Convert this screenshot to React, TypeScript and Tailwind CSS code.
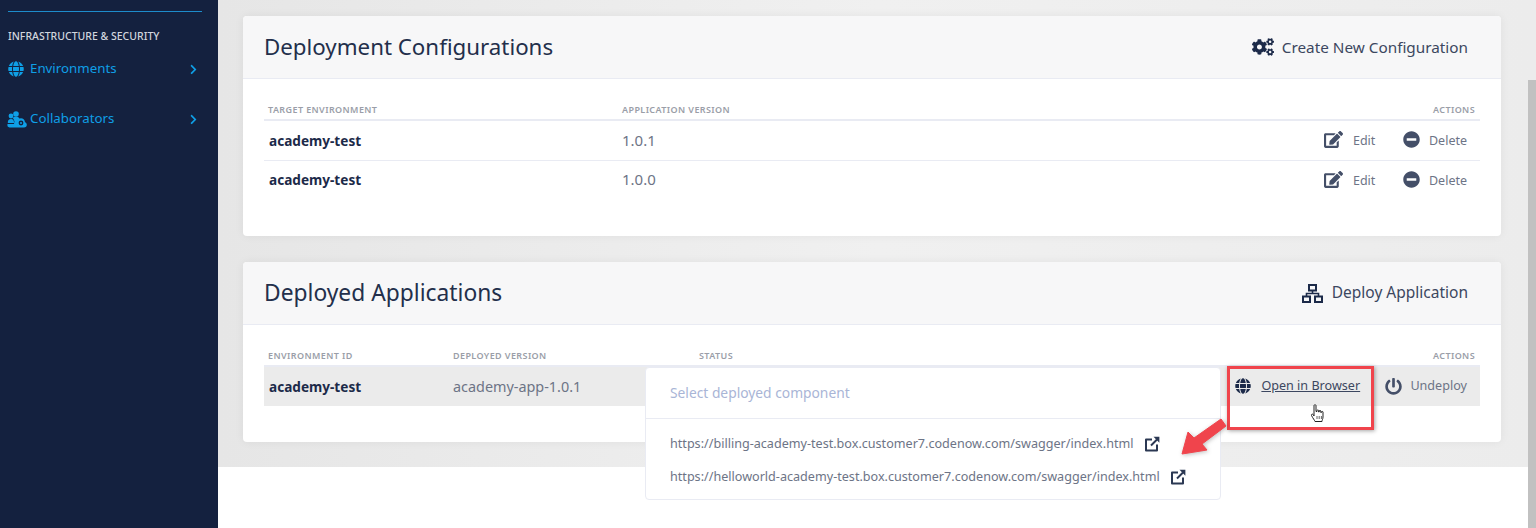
import React from "react";
import { FaGlobe, FaChevronRight, FaCogs, FaEdit, FaMinusCircle, FaPowerOff } from "react-icons/fa";

const font = "font-['Noto_Sans','Liberation_Sans',sans-serif]";

function CollabIcon() {
  return (
    <svg width="20" height="17" viewBox="0 0 20 17" fill="#0f9fe6" className="shrink-0 mr-[3px] -ml-[1px]">
      <circle cx="4" cy="5" r="2.400" />
      <circle cx="9" cy="3" r="2.800" />
      <path d="M.8 12c0-3 1-4 3.200-4s3 1 3 4H.8Z" />
      <path d="M5.500 7c.8-1 2-1.300 3.500-1.300 1.800 0 3 .6 3.500 2L11 9.500 10.500 12H7.500C7.500 9.500 6.800 8 5.500 7Z" />
      <path d="M2.500 16.500C.8 16.200 0 15 .5 13H7v3.500Z" />
      <path d="M7 16.500h10c1.700 0 2.800-1 2.800-2.700 0-1.300-.8-2.200-1.800-2.500-.2-2.500-2-4-4-4s-3.500 1.200-4 3C8 10.500 7 11.200 7 13Z" />
      <circle cx="14" cy="12" r="2.400" fill="#14213f" />
      <circle cx="14" cy="12" r="1" fill="#0f9fe6" />
    </svg>
  );
}

function SitemapIcon() {
  return (
    <svg width="21" height="19" viewBox="0 0 21 19" fill="none" stroke="#1c2a49" strokeWidth="2" className="shrink-0">
      <rect x="7" y="1" width="7" height="5.500" />
      <rect x="1" y="12.500" width="7" height="5.500" />
      <rect x="13" y="12.500" width="7" height="5.500" />
      <path d="M10.500 6.500v3M4.500 12.500v-3h12v3" strokeWidth="1.600" />
    </svg>
  );
}

function ExtLink() {
  return (
    <svg width="16" height="16" viewBox="0 0 16 16" fill="none" className="shrink-0">
      <path d="M8 3.500H2v11h11V8.500" stroke="#2b3853" strokeWidth="2" strokeLinejoin="round" />
      <path d="M7 9.500 13 3.500" stroke="#2b3853" strokeWidth="2" />
      <path d="M9.500 0.800H15.400V6.700Z" fill="#2b3853" />
    </svg>
  );
}

function Th({ children, className = "" }: { children: React.ReactNode; className?: string }) {
  return <div className={`text-[9px] font-semibold tracking-[0.4px] uppercase text-[#9a9ea8] ${className}`}>{children}</div>;
}

function ConfigRow({ version, border }: { version: string; border?: boolean }) {
  return (
    <div className={`flex items-center pl-[5px] pr-[13px] ${border ? "h-[40px] border-b border-[#e9ebf3]" : "h-[39px]"}`}>
      <div className={`w-[353px] text-[13.6px] font-bold text-[#1c2a49] ${border ? "pt-[1px]" : ""}`}>academy-test</div>
      <div className={`text-[15px] text-[#6d7486] ${border ? "" : "pb-[2px]"}`}>{version}</div>
      <div className="ml-auto flex items-center text-[#6d7486] text-[12.5px]">
        <FaEdit className="text-[#444f68] text-[19px] -mt-[2px]" />
        <span className="ml-[10px] w-[26px] mt-[2px]">Edit</span>
        <FaMinusCircle className="text-[#444f68] text-[17px] ml-[24px] -mt-[2px]" />
        <span className="ml-[9px] mt-[2px]">Delete</span>
      </div>
    </div>
  );
}

export default function App() {
  return (
    <div className={`${font} relative flex h-[528px] w-[1536px] overflow-hidden bg-white`}>
      <aside className="w-[218px] shrink-0 bg-[#14213f] pl-[8px] pt-[11px]">
        <div className="h-px w-[194px] bg-[#1d8ccb]" />
        <div className="mt-[18px] text-[10.5px] leading-[12px] font-medium text-[#d2d6de] whitespace-nowrap">INFRASTRUCTURE &amp; SECURITY</div>
        <div className="mt-[17px] flex h-[20px] items-center w-[191px] text-[#0f9fe6] text-[13.3px]">
          <FaGlobe className="text-[16px] w-[16px] mr-[6px]" />
          <span>Environments</span>
          <FaChevronRight className="ml-auto text-[11px]" />
        </div>
        <div className="mt-[30px] flex h-[20px] items-center w-[191px] text-[#0f9fe6] text-[13.3px]">
          <CollabIcon />
          <span>Collaborators</span>
          <FaChevronRight className="ml-auto text-[11px]" />
        </div>
      </aside>

      <main className="flex-1 flex flex-col">
        <div className="h-[467px] bg-gradient-to-r from-[#e6e6e6] via-[#f0f0f0] to-[#ececec] pl-[25px] pr-[35px] pt-[16px] relative">
          <section className="h-[220px] rounded-[4px] bg-white shadow-[0_0_10px_rgba(0,0,0,0.06)]">
            <header className="flex h-[63px] items-center justify-between rounded-t-[4px] border-b border-[#e9ebf3] bg-[#f7f7f8] pl-[21px] pr-[33px]">
              <h2 className="text-[22.3px] text-[#232f4b]">Deployment Configurations</h2>
              <div className="flex items-center text-[#3c4760] text-[15.3px]">
                <FaCogs className="text-[#1c2a49] text-[22px] mr-[8px]" />
                Create New Configuration
              </div>
            </header>
            <div className="px-[21px] pt-[24px]">
              <div className="flex h-[18px] items-start pl-[4px] pr-[5px] border-b-2 border-[#e9ebf3]">
                <Th className="w-[354px]">Target Environment</Th>
                <Th>Application Version</Th>
                <Th className="ml-auto">Actions</Th>
              </div>
              <ConfigRow version="1.0.1" border />
              <ConfigRow version="1.0.0" />
            </div>
          </section>

          <section className="mt-[26px] h-[180px] rounded-[4px] bg-white shadow-[0_0_10px_rgba(0,0,0,0.06)]">
            <header className="flex h-[63px] items-center justify-between rounded-t-[4px] border-b border-[#e9ebf3] bg-[#f7f7f8] pl-[21px] pr-[33px]">
              <h2 className="text-[22.8px] text-[#232f4b]">Deployed Applications</h2>
              <div className="flex items-center text-[#3c4760] text-[15.5px]">
                <SitemapIcon />
                <span className="ml-[9px]">Deploy Application</span>
              </div>
            </header>
            <div className="px-[21px] pt-[24px]">
              <div className="flex h-[18px] items-start pl-[4px] pr-[5px] border-b-2 border-[#e9ebf3]">
                <Th className="w-[185px]">Environment ID</Th>
                <Th className="w-[246px]">Deployed Version</Th>
                <Th>Status</Th>
                <Th className="ml-auto">Actions</Th>
              </div>
              <div className="flex h-[39px] items-center bg-[#ebebeb] pl-[5px] pr-[13px]">
                <div className="w-[184px] text-[13.6px] font-bold text-[#1c2a49] pt-[1px]">academy-test</div>
                <div className="text-[14.4px] text-[#6d7486]">academy-app-1.0.1</div>
                <div className="ml-auto flex items-center text-[12.6px] whitespace-nowrap">
                  <FaGlobe className="text-[#1c2a49] text-[16px]" />
                  <span className="ml-[10px] w-[98px] text-[#3c4760] underline">Open in Browser</span>
                  <FaPowerOff className="ml-[26px] text-[17px] text-[#444f68]" />
                  <span className="ml-[8px] text-[#6d7486]">Undeploy</span>
                </div>
              </div>
            </div>
          </section>
        </div>
      </main>

      <div className="absolute left-[645px] top-[367px] h-[133px] w-[576px] rounded-[4px] border border-[#e9ebf3] bg-white">
        <div className="flex h-[51px] items-center border-b border-[#e9ebf3] pl-[24px] text-[13.8px] text-[#a9b5d6]">Select deployed component</div>
        <div className="flex items-center h-[16px] mt-[17px] pl-[24px] text-[12.6px] text-[#6d7486] whitespace-nowrap">
          https://billing-academy-test.box.customer7.codenow.com/swagger/index.html
          <span className="ml-[10px]"><ExtLink /></span>
        </div>
        <div className="flex items-center h-[16px] mt-[17px] pl-[24px] text-[12.6px] text-[#6d7486] whitespace-nowrap">
          https://helloworld-academy-test.box.customer7.codenow.com/swagger/index.html
          <span className="ml-[10px]"><ExtLink /></span>
        </div>
      </div>

      <div className="absolute left-[1227px] top-[366px] h-[64px] w-[147px] border-[3px] border-[#f0444c] shadow-[1px_1px_4px_rgba(0,0,0,0.35)]" />

      <svg className="absolute left-[1175px] top-[416px] drop-shadow-[1px_1px_2px_rgba(0,0,0,0.25)]" width="56" height="44" viewBox="0 0 56 44">
        <path d="M46 3 51 10 27 28 32 34 7 38 13 16 19 22Z" fill="#f0444c" stroke="#f0444c" strokeWidth="1" strokeLinejoin="round" />
      </svg>

      <svg className="absolute left-[1310px] top-[404px]" width="15" height="19" viewBox="0 0 15 19" fill="#fff" stroke="#222" strokeWidth="1" strokeLinejoin="round">
        <path d="M4 1.500c0-1 2-1 2 0v6l1 0V6.500c0-.8 1.600-.8 1.600 0v1.500h.6V7c0-.8 1.600-.8 1.600 0v1.500h.6V8c0-.8 1.600-.8 1.600 0v5c0 2-1 3-1 4.500H5c-.5-1.500-2-3-3.500-6-.5-1 .8-2 1.600-1L4 12Z" />
        <path d="M7 12v3M9.200 12v3M11.400 12v3" fill="none" strokeWidth=".7" />
      </svg>

      <div className="absolute right-0 top-[80px] h-[448px] w-[8px] bg-[#c1c1c1]" />
    </div>
  );
}
